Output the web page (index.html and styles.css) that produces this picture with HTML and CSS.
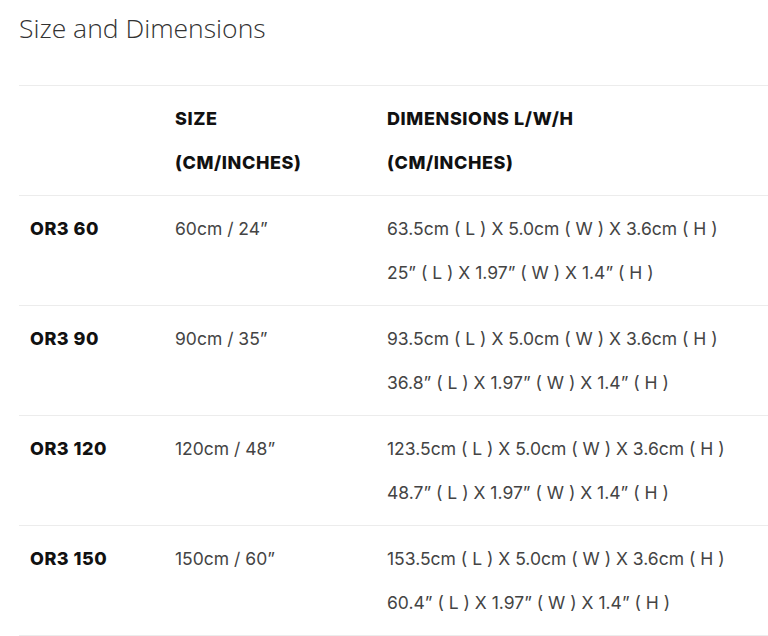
FILE: index.html
```html
<!DOCTYPE html>
<html>
<head>
<meta charset="utf-8">
<link rel="stylesheet" href="styles.css">
</head>
<body>
<div class="page">
  <h2 class="title">Size and Dimensions</h2>
  <table class="dims">
    <tr class="head">
      <th class="c1"></th>
      <th class="c2">SIZE<br>(CM/INCHES)</th>
      <th class="c3">DIMENSIONS L/W/H<br>(CM/INCHES)</th>
    </tr>
    <tr>
      <td class="c1 model">OR3 60</td>
      <td class="c2">60cm / 24”</td>
      <td class="c3">63.5cm ( L ) X 5.0cm ( W ) X 3.6cm ( H )<br>25” ( L ) X 1.97” ( W ) X 1.4” ( H )</td>
    </tr>
    <tr>
      <td class="c1 model">OR3 90</td>
      <td class="c2">90cm / 35”</td>
      <td class="c3">93.5cm ( L ) X 5.0cm ( W ) X 3.6cm ( H )<br>36.8” ( L ) X 1.97” ( W ) X 1.4” ( H )</td>
    </tr>
    <tr>
      <td class="c1 model">OR3 120</td>
      <td class="c2">120cm / 48”</td>
      <td class="c3">123.5cm ( L ) X 5.0cm ( W ) X 3.6cm ( H )<br>48.7” ( L ) X 1.97” ( W ) X 1.4” ( H )</td>
    </tr>
    <tr>
      <td class="c1 model">OR3 150</td>
      <td class="c2">150cm / 60”</td>
      <td class="c3">153.5cm ( L ) X 5.0cm ( W ) X 3.6cm ( H )<br>60.4” ( L ) X 1.97” ( W ) X 1.4” ( H )</td>
    </tr>
  </table>
</div>
</body>
</html>
```
FILE: styles.css
```css
html, body {
  margin: 0;
  padding: 0;
  background: #fff;
}
.page {
  padding: 0 0 0 19px;
  font-family: "Inter", "Open Sans", sans-serif;
}
.title {
  margin: 0;
  height: 85px;
  padding-top: 8px;
  box-sizing: border-box;
  font-family: "Open Sans", sans-serif;
  font-size: 26.5px;
  line-height: 40px;
  font-weight: 300;
  color: #333;
}
.dims {
  width: 749px;
  border-collapse: collapse;
  font-size: 17.5px;
  line-height: 44px;
  color: #444;
}
.dims th, .dims td {
  border-top: 1px solid #ececec;
  border-bottom: 1px solid #ececec;
  padding: 11px 0 10px;
  text-align: left;
  vertical-align: top;
}
.dims th {
  font-size: 18px;
  font-weight: 800;
  letter-spacing: 0.6px;
  color: #111;
}
.c1 { width: 145px; padding-left: 11px !important; }
.c2 { width: 212px; }
.c3 { width: auto; }
.model {
  font-size: 18px;
  font-weight: 800;
  letter-spacing: 0.5px;
  color: #111;
}
```
